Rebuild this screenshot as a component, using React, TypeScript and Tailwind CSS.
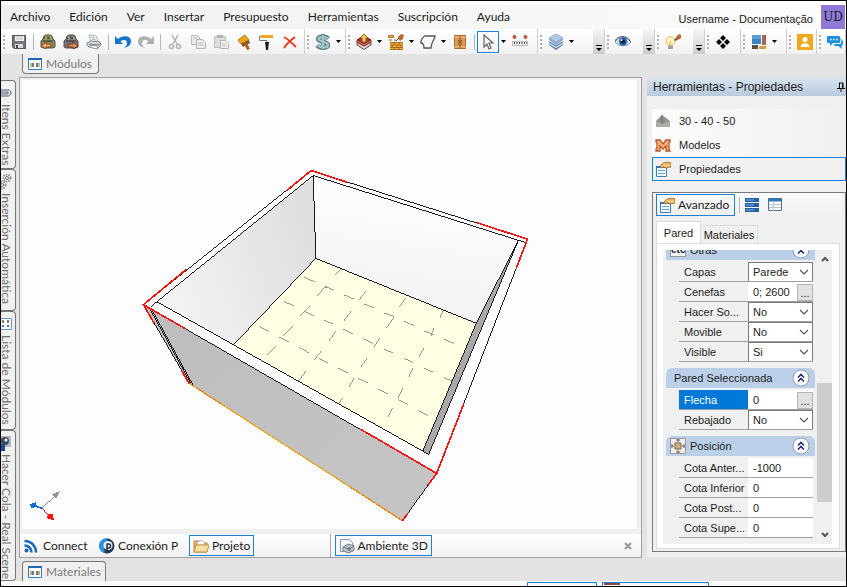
import React from 'react';

type IconProps = { children: React.ReactNode; size?: string };

const Icon = ({ children, size = 'size-4' }: IconProps) => (
  <svg viewBox="0 0 16 16" className={size + ' shrink-0'} fill="none" aria-hidden="true">
    {children}
  </svg>
);

const ToolButton = ({ label, children }: { label: string; children: React.ReactNode }) => (
  <button aria-label={label} className="flex w-[23px] h-[22px] shrink-0 items-center justify-center">
    {children}
  </button>
);

const Grip = () => (
  <svg viewBox="0 0 6 16" className="w-[6px] h-4 shrink-0" aria-hidden="true">
    <path d="M3 1v15" stroke="#b0b0b0" strokeWidth="2" strokeDasharray="2 2" />
  </svg>
);

const Separator = () => <div className="w-px h-[16px] ml-[3px] mr-[2px] bg-[#b5b5b5] shrink-0" />;

const Arrow = ({ label }: { label: string }) => (
  <button aria-label={label} className="flex w-[9px] h-[22px] shrink-0 items-center justify-center">
    <svg viewBox="0 0 5 3" className="w-[5px] h-[3px]" aria-hidden="true">
      <path d="M0 0h5L2.5 3z" fill="#000" />
    </svg>
  </button>
);

const Overflow = () => (
  <button
    aria-label="Más opciones"
    className="ml-auto flex w-[11px] h-full shrink-0 items-end justify-center bg-linear-to-b from-[#f7f7f7] to-[#cccccc] pb-[3px]"
  >
    <svg viewBox="0 0 6 6" className="size-[6px]" aria-hidden="true">
      <path d="M0 0h6v1H0zM0 3h6L3 6z" fill="#000" />
    </svg>
  </button>
);

const group =
  'flex h-full items-center shrink-0 border-r border-[#cfcfcf] bg-linear-to-b from-white to-[#f1f1f1]';

const SaveIcon = () => (
  <Icon>
    <path d="M1 1h14v14H3l-2-2z" fill="#77777b" />
    <path d="M4 1h9v6H4z" fill="#f3f3f3" />
    <path d="M5 3h7M5 5h7" stroke="#bdbdbd" />
    <path d="M4 10h8v5H4z" fill="#d9d9d9" />
    <path d="M5 11h2v3H5z" fill="#444" />
    <path d="M1.500 1.500h13v13h-11l-2-2z" stroke="#55555a" />
  </Icon>
);

const BagIcon = ({ body, flip }: { body: string; flip?: boolean }) => (
  <Icon>
    <path d="M4 2l2-1h4l2 1 1 3 2 2v6l-2 1H3l-2-1V7l2-2z" fill={body} stroke="#555043" />
    <path d="M4 4h8M3 7h10" stroke="#33332e" />
    <path d="M5 3h1v3M10 3h1v3" stroke="#d0c9a0" />
    {flip ? (
      <path d="M5 10h5V8l5 4-5 3v-2H5z" fill="#d98d62" stroke="#79361b" />
    ) : (
      <path d="M11 10H6V8l-5 4 5 3v-2h5z" fill="#eca86b" stroke="#8a4a1f" />
    )}
  </Icon>
);

const PrintIcon = () => (
  <Icon>
    <path d="M3 1l7 1 2 5-7 1z" fill="#fff" stroke="#a6b3ba" />
    <path d="M5 3l4 1M6 5l4 1" stroke="#8fb0c6" />
    <path d="M1 9l4-2 9 1 1 3-3 3-9-1-2-2z" fill="#d8dbdd" stroke="#83898e" />
    <path d="M3 10l9 1 2-1M5 13l6 1" stroke="#6e7478" />
    <path d="M4 11l7 1 1 3-6-1z" fill="#f8f8f8" stroke="#999" />
  </Icon>
);

const UndoIcon = () => (
  <Icon>
    <path d="M0 2v8h8L5.500 7.500C7 5.800 12 5 12 9c0 2-1 3.500-3 5 4-1 7-3 7-7C16 1 7 1 3 5z" fill="#1873cd" />
  </Icon>
);

const RedoIcon = () => (
  <Icon>
    <path d="M16 2v8H8l2.500-2.500C9 5.800 4 5 4 9c0 2 1 3.500 3 5-4-1-7-3-7-7C0 1 9 1 13 5z" fill="#b0b0b0" />
  </Icon>
);

const CutIcon = () => (
  <Icon>
    <path d="M5 1l5 9M11 1L6 10" stroke="#b2b2b2" strokeWidth="1.5" />
    <circle cx="4.500" cy="12.500" r="2" stroke="#b2b2b2" strokeWidth="1.5" />
    <circle cx="11.500" cy="12.500" r="2" stroke="#b2b2b2" strokeWidth="1.5" />
  </Icon>
);

const CopyIcon = () => (
  <Icon>
    <path d="M1.500 1.500h6l2 2v7h-8z" fill="#e9e9e9" stroke="#bcbcbc" />
    <path d="M6.500 5.500h6l3 3v6h-9z" fill="#eee" stroke="#b2b2b2" />
    <path d="M8 9h5M8 11h6M3 4h4" stroke="#bcbcbc" />
  </Icon>
);

const PasteIcon = () => (
  <Icon>
    <path d="M1.500 2.500h11v11h-11z" fill="#dedede" stroke="#bcbcbc" />
    <path d="M4 1h6v3H4z" fill="#b5b5b5" />
    <path d="M7.500 6.500h5l3 3v5h-8z" fill="#f0f0f0" stroke="#b5b5b5" />
    <path d="M9 10h4M9 12h5" stroke="#c4c4c4" />
  </Icon>
);

const BrushIcon = () => (
  <Icon>
    <path d="M2 6l7-5 4 5-8 4z" fill="#eda51e" stroke="#b9770d" />
    <path d="M5 10l8-4 1 3-7 4z" fill="#8d5526" />
    <path d="M8 10l3-1 3 6-3 1z" fill="#a5662e" />
  </Icon>
);

const RollerIcon = () => (
  <Icon>
    <path d="M2 1h12v3H2z" fill="#f3a31c" />
    <path d="M2 2.500H.5v4H8v2" stroke="#777" />
    <path d="M6 8h4l-1 8H7z" fill="#1c1c1c" />
  </Icon>
);

const DeleteIcon = () => (
  <Icon>
    <path d="M2 3c4 2 8 6 12 10M13 3C9 6 5 9 2 14" stroke="#ef3316" strokeWidth="1.800" />
  </Icon>
);

const DollarIcon = () => (
  <Icon>
    <path d="M8 0v16" stroke="#5f8188" strokeWidth="3.500" />
    <path
      d="M13.500 4.500C11 2 3 2 3 5s10 2.500 10 6-8 3.500-11 .500"
      stroke="#5f8188"
      strokeWidth="4.500"
    />
    <path d="M13 4.500C11 2.500 3.500 2.500 3.500 5S13 7.500 13 11s-7.500 3-10.500.500M8 1v14" stroke="#a5c6c8" strokeWidth="2.200" />
  </Icon>
);

const ExportIcon = () => (
  <Icon>
    <path d="M1 6l7-4 7 4v5l-7 4.500L1 11z" fill="#d9d9d9" stroke="#555" />
    <path d="M1 6l7 4 7-4-7-4z" fill="#b8322b" stroke="#7d1915" />
    <path d="M1 8l7 4 7-4" stroke="#b8322b" strokeWidth="1.500" />
    <path d="M8 0l4 4h-2v4H6V4H4z" fill="#f7c66a" stroke="#9a5a10" />
  </Icon>
);

const BricksIcon = () => (
  <Icon>
    <path d="M.5 1.500h5v2h-5z" fill="#f2b233" stroke="#8f5a11" strokeWidth=".8" />
    <path d="M1 6h3M6 6h2" stroke="#8f5a11" />
    <path d="M2 8h13v8H2z" fill="#efb13a" />
    <path d="M2 8.500h13M2 11h13M2 13.500h13M2 15.500h13M6 8v3M11 8v3M4 11v3M9 11v3M13 11v3M6 13v3M11 13v3" stroke="#9a5f15" strokeWidth=".8" />
    <path d="M10 3l3-3 3 1-1 4-3 2z" fill="#b86a31" />
    <path d="M8 7l3-3" stroke="#333" />
  </Icon>
);

const ShapeIcon = () => (
  <Icon>
    <path d="M5 2h10c0 3-4 6-4 12H4c0-3-1-5-3-5 0-3 2-6 4-7z" fill="#fafafa" stroke="#555" strokeWidth="1.300" />
  </Icon>
);

const CabinetIcon = () => (
  <Icon>
    <path d="M2.500 1.500h11v13h-11z" fill="#d99a55" stroke="#a66b2d" />
    <path d="M2 3h12M2 13h12" stroke="#efc088" />
    <path d="M8 2v12" stroke="#8e5824" />
    <path d="M6 6l1 1M10 6L9 7M6 10h1M9 10h1M6.500 8h3" stroke="#6d4015" />
  </Icon>
);

const CursorIcon = () => (
  <Icon>
    <path d="M4 1v12l3-3 2 5 2-1-2-5h4z" fill="#f8f8f8" stroke="#636363" strokeWidth="1.200" />
  </Icon>
);

const RulerIcon = () => (
  <Icon>
    <circle cx="2.500" cy="3" r="2" fill="#cf5b3c" />
    <circle cx="13.500" cy="3" r="2" fill="#cf5b3c" />
    <path d="M1 2h2M12 2h2" stroke="#4d6b64" />
    <path d="M.5 7.500h15v4H.5z" fill="#ededed" stroke="#bbb" />
    <path d="M2 9h13" stroke="#444" strokeWidth="2" strokeDasharray="1 1.500" />
  </Icon>
);

const LayersIcon = () => (
  <Icon>
    <path d="M1 10l7 4 7-4v1l-7 5-7-5z" fill="#5c7eb0" />
    <path d="M1 7l7 4 7-4v2l-7 4-7-4z" fill="#7697c4" />
    <path d="M1 4l7 4 7-4v2l-7 5-7-5z" fill="#8dabd1" />
    <path d="M8 0l7 4-7 4-7-4z" fill="#b4cbe4" stroke="#8fabcb" />
  </Icon>
);

const EyeIcon = () => (
  <Icon>
    <path d="M0 8c3-6 13-6 16 0-4 5-12 5-16 0z" fill="#d5dee8" stroke="#8796a8" />
    <path d="M0 7c3-6 12-6 15 0" stroke="#425872" />
    <circle cx="8" cy="7.500" r="4" fill="#205fa6" />
    <circle cx="8" cy="7.500" r="2" fill="#071c38" />
    <circle cx="6.500" cy="6" r="1" fill="#fff" />
  </Icon>
);

const BulbIcon = () => (
  <Icon>
    <circle cx="5.500" cy="7" r="4.500" fill="#fff3c4" stroke="#e4bd64" />
    <path d="M3 11.500h5V15H3z" fill="#a0a0a0" />
    <path d="M5 11V8l1-1" stroke="#e8a91b" />
    <path d="M9 6l3-3 2 1-3 3z" fill="#555" />
    <path d="M11 3l3-3 2 1v3l-3 2z" fill="#c06424" />
  </Icon>
);

const DiamondsIcon = () => (
  <Icon>
    <path d="M8 1l3 3-3 3-3-3zM8 9l3 3-3 3-3-3zM4 5l3 3-3 3-3-3zM12 5l3 3-3 3-3-3z" fill="#050505" />
  </Icon>
);

const TilesIcon = () => (
  <Icon>
    <path d="M1 1h9v9H1z" fill="#5aa0d5" />
    <path d="M1 5h9v5H1z" fill="#3686c4" />
    <path d="M11 1h4v10h-4z" fill="#ad6257" />
    <path d="M1 11h6v4H1z" fill="#5c4d43" />
    <path d="M8 12h7v3H8z" fill="#d89b4d" />
  </Icon>
);

const UserIcon = () => (
  <Icon>
    <path d="M0 0h16v16H0z" fill="#f3a71c" />
    <circle cx="8" cy="5.500" r="2.500" fill="#fff" />
    <path d="M3.500 13c0-5 9-5 9 0z" fill="#fff" />
  </Icon>
);

const ChatIcon = () => (
  <Icon>
    <path d="M1 2h11c2 0 2 7 0 7H6l-3 3V9H1C-1 9-1 2 1 2z" fill="#1b8fdb" />
    <path d="M14.500 5c2 1 2 6 0 7v3l-3-3H8l-1-2h6c1 0 1.500-2 1.500-5z" fill="#1b8fdb" />
    <path d="M3 5.500h8" stroke="#fff" strokeWidth="1.500" strokeDasharray="1.500 1.500" />
  </Icon>
);

const ModulesIcon = ({ tone }: { tone: string }) => (
  <Icon>
    <path d="M1.500 2.500h13v11h-13z" fill="#fbfdff" stroke="#2c7cc4" />
    <path d="M1 3h14" stroke="#1c67b3" strokeWidth="2" />
    <path d="M3 7h4v4H3zM9 7h4v4H9z" fill={tone} />
    <path d="M5 7h2v4H5zM9 7h2v4H9z" fill="#6d7b83" />
  </Icon>
);

const PropertiesIcon = () => (
  <Icon>
    <path d="M1.500 5.500h10v10h-10z" fill="#f3f9ff" stroke="#3b7fbd" />
    <path d="M1 6h11" stroke="#2d76bb" strokeWidth="2" />
    <path d="M3 9.500h7M3 12.500h7" stroke="#69a1cf" />
    <path d="M5 5l3-3 5-1 3 1v4l-5 1-2-1-3 1z" fill="#f1b45e" stroke="#9b6424" strokeWidth=".8" />
    <path d="M8 3l3 2 4-1" stroke="#fce0ae" />
  </Icon>
);

const menus = ['Archivo', 'Edición', 'Ver', 'Insertar', 'Presupuesto', 'Herramientas', 'Suscripción', 'Ayuda'];

const Header = () => (
  <header className="flex h-7 shrink-0 items-end justify-between bg-linear-to-r from-[#efefef] to-[#fcfcfc] border-t-4 border-white">
    <nav className="flex h-full items-center gap-[19px] pl-[9px]">
      {menus.map((item) => (
        <button key={item}>{item}</button>
      ))}
    </nav>
    <div className="flex items-center gap-2 pr-px font-['Liberation_Sans',sans-serif]">
      <span className="pt-1 text-[11px]">Username - Documentação</span>
      <span className="flex size-6 items-center justify-center bg-[#8f78d6] font-['DejaVu_Serif',serif] text-[12px]">
        UD
      </span>
    </div>
  </header>
);

const Toolbar = () => (
  <div className="flex h-[25px] shrink-0 items-center">
    <div className={group + ' w-[304px]'}>
      <Grip />
      <ToolButton label="Guardar"><SaveIcon /></ToolButton>
      <Separator />
      <ToolButton label="Importar"><BagIcon body="#8b8a57" /></ToolButton>
      <ToolButton label="Exportar"><BagIcon body="#74747b" flip /></ToolButton>
      <ToolButton label="Imprimir"><PrintIcon /></ToolButton>
      <Separator />
      <ToolButton label="Deshacer"><UndoIcon /></ToolButton>
      <ToolButton label="Rehacer"><RedoIcon /></ToolButton>
      <Separator />
      <ToolButton label="Cortar"><CutIcon /></ToolButton>
      <ToolButton label="Copiar"><CopyIcon /></ToolButton>
      <ToolButton label="Pegar"><PasteIcon /></ToolButton>
      <ToolButton label="Pincel"><BrushIcon /></ToolButton>
      <ToolButton label="Rodillo"><RollerIcon /></ToolButton>
      <ToolButton label="Eliminar"><DeleteIcon /></ToolButton>
    </div>
    <div className={group + ' w-[41px]'}>
      <Grip />
      <ToolButton label="Precio"><DollarIcon /></ToolButton>
      <Arrow label="Opciones de precio" />
    </div>
    <div className={group + ' w-[192px]'}>
      <Grip />
      <ToolButton label="Insertar módulo"><ExportIcon /></ToolButton>
      <Arrow label="Opciones de módulo" />
      <ToolButton label="Paredes"><BricksIcon /></ToolButton>
      <Arrow label="Opciones de paredes" />
      <ToolButton label="Forma"><ShapeIcon /></ToolButton>
      <Arrow label="Opciones de forma" />
      <ToolButton label="Puertas"><CabinetIcon /></ToolButton>
      <Separator />
      <button
        aria-label="Seleccionar"
        className="flex size-[22px] shrink-0 items-center justify-center border border-[#1a83d8]"
      >
        <CursorIcon />
      </button>
      <Arrow label="Opciones de selección" />
      <ToolButton label="Medir"><RulerIcon /></ToolButton>
    </div>
    <div className={group + ' grow'}>
      <Grip />
      <ToolButton label="Capas"><LayersIcon /></ToolButton>
      <Arrow label="Opciones de capas" />
      <Overflow />
    </div>
    <div className={group + ' w-[50px]'}>
      <Grip />
      <ToolButton label="Ver"><EyeIcon /></ToolButton>
      <Overflow />
    </div>
    <div className={group + ' w-[50px]'}>
      <Grip />
      <ToolButton label="Iluminación"><BulbIcon /></ToolButton>
      <Overflow />
    </div>
    <div className={group + ' w-[36px]'}>
      <Grip />
      <ToolButton label="Componentes"><DiamondsIcon /></ToolButton>
    </div>
    <div className={group + ' w-[46px]'}>
      <Grip />
      <ToolButton label="Disposición"><TilesIcon /></ToolButton>
      <Arrow label="Opciones de disposición" />
    </div>
    <div className={group + ' w-[30px]'}>
      <Grip />
      <ToolButton label="Usuario"><UserIcon /></ToolButton>
    </div>
    <div className={group + ' w-[29px]'}>
      <Grip />
      <ToolButton label="Chat"><ChatIcon /></ToolButton>
    </div>
  </div>
);

const sideTab =
  'flex flex-col items-end gap-[3px] rounded-r border border-l-0 border-[#767676] bg-[#f0f0f0] pt-1 pr-[3px] text-[#6f6f6f]';
const sideText = 'w-[11px] leading-[11px] whitespace-nowrap [writing-mode:vertical-rl]';

const SideTabs = () => (
  <div className="flex w-[15px] shrink-0 flex-col overflow-hidden pt-[26px]">
    <button className={sideTab + ' h-[89px] shrink-0'}>
      <Icon>
        <path d="M0 5h12c4 0 4 6 0 6H0M0 7h11c2 0 2 2 0 2H0" stroke="#55557c" />
      </Icon>
      <span className={sideText}>Itens Extras</span>
    </button>
    <button className={sideTab + ' h-[142px] shrink-0'}>
      <Icon>
        <circle cx="11" cy="4" r="3.500" stroke="#8e8e8e" strokeWidth="2" strokeDasharray="1.500 1" />
        <circle cx="6" cy="11" r="3.500" stroke="#8e8e8e" strokeWidth="2" strokeDasharray="1.500 1" />
        <circle cx="11" cy="4" r="1.500" stroke="#777" />
        <circle cx="6" cy="11" r="1.500" stroke="#777" />
      </Icon>
      <span className={sideText}>Inserción Automática</span>
    </button>
    <button className={sideTab + ' h-[119px] shrink-0'}>
      <Icon>
        <path d="M2.500 2.500h13v11h-13z" fill="#fff" stroke="#579ad4" />
        <path d="M6 4h2v3H6zM11 4h2v3h-2z" fill="#8c7a69" />
        <path d="M6 9h2v2H6zM11 9h2v2h-2z" fill="#4877bb" />
      </Icon>
      <span className={sideText}>Lista de Módulos</span>
    </button>
    <button className={sideTab + ' grow'}>
      <Icon>
        <path d="M3 1h12v11H3z" fill="#b8b8b8" />
        <circle cx="9" cy="6" r="4" fill="#3a4c63" />
        <circle cx="10" cy="5" r="1.500" fill="#fff" />
        <path d="M3 9h6v7H3z" fill="#174d93" />
      </Icon>
      <span className={sideText}>Hacer Cola - Real Scene</span>
    </button>
  </div>
);

const tileMarks =
  'M631 328l-18 18M521 352l31 13M583 379l29 12M589 379l-9 5-18 23M641 405l31 13M707 393l-22 27M702 432l30 12M825 415l-18 27M762 459l30 11-23 33M939 452l-10 21M459 424l30 13M536 439l-26 28M520 453l29 14M662 454l-21 28M579 481l29 13M821 484l31 13M882 513l29 11M911 505l-9 23M941 538l31 13M384 499l30 15M485 499l-26 28M444 531l30 15M616 514l-20 28M639 508l30 15M699 537l30 15M748 535l-17 25M760 567l29 13M880 565l-14 27M820 595l28 12M880 625l29 12M940 653l26 10M848 625l-13 27M434 559l-25 27M504 562l30 16M572 574l-22 27M564 595l30 15M710 595l-19 27M624 625l29 15M526 634l-21 28M684 656l30 14M671 655l-16 27M744 688l30 15M818 685l-15 28M804 720l29 14M864 752l30 15M785 746l-13 27M636 714l-10 15';

const Scene = () => (
  <svg viewBox="0 0 616 449" className="block w-full h-full" role="img" aria-label="Ambiente 3D" shapeRendering="crispEdges">
    <defs>
      <linearGradient id="leftWall" x1="0" y1="0.700" x2="1" y2="0.300">
        <stop offset="0" stopColor="#f4f4f5" />
        <stop offset="0.500" stopColor="#e9e9ea" />
        <stop offset="1" stopColor="#dedede" />
      </linearGradient>
      <linearGradient id="backWall" x1="0.600" y1="0" x2="0.400" y2="1">
        <stop offset="0" stopColor="#ffffff" />
        <stop offset="1" stopColor="#f1f1f3" />
      </linearGradient>
      <linearGradient id="frontWall" x1="0" y1="0" x2="1" y2="1">
        <stop offset="0" stopColor="#bdbdbd" />
        <stop offset="1" stopColor="#c5c5c5" />
      </linearGradient>
    </defs>
    <g transform="translate(109 80) scale(0.33333)" fill="none" strokeWidth="3" stroke="#1a1a1a">
      <path d="M38 434L919 941L816 1083L188 678L175 670z" fill="url(#frontWall)" stroke="none" />
      <path d="M548 46L556 295L308 555L78 425z" fill="url(#leftWall)" stroke="none" />
      <path d="M548 46L1164 242L1038 490L556 295z" fill="url(#backWall)" stroke="none" />
      <path d="M556 295L1038 490L877 875L308 555z" fill="#ffffe3" stroke="none" />
      <path d={tileMarks} stroke="#96968a" />
      <path d="M1164 242L1038 490L877 875L895 884z" fill="#a9a9a9" stroke="none" />
      <path d="M548 46L556 295L1038 490M556 295L308 555M548 46L60 440M548 46L1188 248M78 425L895 884L1164 242L1038 490L877 875" />
      <path d="M542 31L38 434L919 941L1192 237zM38 434L175 670M58 448L182 674M66 454L188 678M919 941L816 1083" />
      <path d="M175 670L816 1083" stroke="#e9a51c" strokeWidth="4" />
      <path d="M175 670L275 735M660 983L816 1083" stroke="#f4510f" strokeDasharray="5 4" />
      <path
        d="M470 90L542 31L650 66M168 327L38 434L165 507M38 434L70 490M152 632L175 670M1040 188L1192 237L1158 325M1000 733L919 941L690 808M919 941L892 977M832 1062L816 1083"
        stroke="#f5130e"
        strokeWidth="5"
      />
    </g>
    <g transform="translate(-21 400) scale(0.33333)" fill="none" strokeWidth="3">
      <path d="M123 86L158 52" stroke="#8a8a8a" />
      <path d="M178 34L152 44L165 57z" fill="#8f9a8b" />
      <path d="M123 86L104 79" stroke="#0b6bd6" strokeWidth="5" />
      <path d="M86 75L104 67L108 80L92 87z" fill="#0b6bd6" />
      <path d="M123 86L142 106" stroke="#fb1410" />
      <path d="M159 123L137 115L143 103L155 103z" fill="#fb1410" />
    </g>
  </svg>
);

const blueButton = 'flex h-[21px] items-center gap-[3px] border border-[#1a83d8] px-[3px]';

const Workspace = () => (
  <main className="flex min-w-0 grow flex-col pl-[3px]">
    <button className="mb-[3px] ml-[3px] flex h-5 w-[77px] shrink-0 items-center gap-[3px] rounded-b border border-t-0 border-[#777] bg-[#f0f0f0] px-1 text-[#777a7c]">
      <ModulesIcon tone="#c9bd8d" />
      Módulos
    </button>
    <section className="flex min-h-0 grow flex-col border border-[#a0a0a0] bg-[#f0f0f0]">
      <div className="mt-0.5 mr-1 ml-0.5 min-h-0 grow bg-[#fdfdfd]">
        <Scene />
      </div>
      <div className="mt-[5px] flex h-[23px] shrink-0">
        <div className="flex w-1/2 items-center border-r border-[#a8a8a8] bg-linear-to-b from-white to-[#f1f1f1] pl-[3px]">
          <button className="flex w-[76px] items-center gap-1">
            <Icon>
              <circle cx="3.500" cy="12.500" r="2" fill="#1b5fae" />
              <path d="M1.500 7.500c4 0 7 3 7 7M1.500 3c7 0 11.500 5 11.500 11.500" stroke="#1b69bd" strokeWidth="2.500" />
            </Icon>
            Connect
          </button>
          <button className="flex w-[90px] items-center gap-[3px]">
            <Icon>
              <circle cx="8" cy="8" r="7.500" fill="#263a50" />
              <path d="M9 0.500A7.500 7.500 0 0 0 6 15.300L5 11 6 6z" fill="#2b91dc" />
              <circle cx="9" cy="7.500" r="4.500" fill="#f5f8fb" />
              <path d="M8 13V6h2c2 0 2 4 0 4H8" stroke="#1e2f42" strokeWidth="1.500" />
            </Icon>
            Conexión P
          </button>
          <button className={blueButton}>
            <Icon>
              <path d="M1 3h5l1 2h7v9H1z" fill="#e6bd6c" stroke="#b38233" />
              <path d="M4 4l5-2 4 5H5z" fill="#fff" stroke="#a2a2a2" strokeWidth=".8" />
              <path d="M3 7h13l-2 7H1z" fill="#f8dea0" stroke="#bf933f" />
            </Icon>
            Projeto
          </button>
        </div>
        <div className="flex grow items-center justify-between bg-linear-to-b from-white to-[#f1f1f1] pr-[7px] pl-1">
          <button className={blueButton}>
            <Icon>
              <path d="M1.500 1.500h9l3 3v9h-12z" fill="#f7fbff" stroke="#7b9fc7" />
              <path d="M4 9l5-3 6 2v4l-5 3-6-2z" fill="#c3c6c9" stroke="#777d83" />
              <path d="M4 9l6 2 5-3" stroke="#73797e" />
              <circle cx="10" cy="11" r="2" fill="#77838d" />
            </Icon>
            Ambiente 3D
          </button>
          <button aria-label="Cerrar" className="flex size-3 items-center justify-center">
            <svg viewBox="0 0 8 8" className="size-2" aria-hidden="true">
              <path d="M1 1l6 6M7 1L1 7" stroke="#999" strokeWidth="2" />
            </svg>
          </button>
        </div>
      </div>
    </section>
    <button className="mt-[3px] ml-[3px] flex h-5 w-[84px] shrink-0 items-center gap-[3px] rounded-t border border-b-0 border-[#777] bg-[#f0f0f0] px-1 text-[#777a7c]">
      <ModulesIcon tone="#d4a56a" />
      Materiales
    </button>
  </main>
);

type Row = { label: string; value: string; kind: 'select' | 'dots' | 'text'; active?: boolean };

const sections: { title: string; icon?: React.ReactNode; rows: Row[] }[] = [
  {
    title: 'Otras',
    icon: <span className="w-4 border border-[#999] bg-[#f4f4f4] text-center text-[10px] leading-3 font-bold">etc</span>,
    rows: [
      { label: 'Capas', value: 'Parede', kind: 'select' },
      { label: 'Cenefas', value: '0; 2600', kind: 'dots' },
      { label: 'Hacer So...', value: 'No', kind: 'select' },
      { label: 'Movible', value: 'No', kind: 'select' },
      { label: 'Visible', value: 'Si', kind: 'select' },
    ],
  },
  {
    title: 'Pared Seleccionada',
    rows: [
      { label: 'Flecha', value: '0', kind: 'dots', active: true },
      { label: 'Rebajado', value: 'No', kind: 'select' },
    ],
  },
  {
    title: 'Posición',
    icon: (
      <Icon>
        <path d="M.5.5h15v15H.5z" fill="#f0eee9" stroke="#999" />
        <path d="M5 5h6v6H5z" fill="#cfae85" stroke="#77664f" />
        <path d="M8 1v3M8 12v3M1 8h3M12 8h3M6 2h4M6 14h4M2 6v4M14 6v4" stroke="#666" />
      </Icon>
    ),
    rows: [
      { label: 'Cota Anter...', value: '-1000', kind: 'text' },
      { label: 'Cota Inferior', value: '0', kind: 'text' },
      { label: 'Cota Post...', value: '0', kind: 'text' },
      { label: 'Cota Supe...', value: '0', kind: 'text' },
    ],
  },
  { title: '', rows: [] },
];

const PropertyRow = ({ row }: { row: Row }) => {
  const id = 'prop-' + row.label.replace(/\W/g, '');
  return (
    <div className="mr-0.5 ml-[13px] flex h-5 border-b border-[#a0a0a0]">
      <label
        htmlFor={id}
        className={
          'w-[69px] shrink-0 pl-[5px] leading-5 whitespace-nowrap ' +
          (row.active ? 'bg-[#0078d7] text-white' : 'bg-[#f0f0f0]')
        }
      >
        {row.label}
      </label>
      {row.kind === 'select' ? (
        <div className="grid min-w-0 grow">
          <select
            id={id}
            className="col-start-1 row-start-1 w-full appearance-none border border-b-0 border-[#7a7a7a] bg-white pl-1 leading-4"
          >
            <option>{row.value}</option>
          </select>
          <svg
            viewBox="0 0 10 6"
            className="pointer-events-none col-start-1 row-start-1 mr-1 h-[6px] w-[10px] self-center justify-self-end"
            aria-hidden="true"
          >
            <path d="M1 1l4 4 4-4" fill="none" stroke="#555" strokeWidth="1.200" />
          </svg>
        </div>
      ) : (
        <div className="flex min-w-0 grow bg-white">
          <input id={id} defaultValue={row.value} className="w-0 min-w-0 grow bg-white pl-[5px] leading-4" />
          {row.kind === 'dots' && (
            <button aria-label={'Editar ' + row.label} className="mt-0.5 w-4 border border-[#b5b5b5] bg-[#e1e1e1] leading-3">
              ...
            </button>
          )}
        </div>
      )}
    </div>
  );
};

const PropertyGrid = () => (
  <div className="flex h-full min-h-0 bg-[#f0f0f0]">
    <div className="min-w-0 grow overflow-hidden pr-0.5 pl-[3px]">
      <div className="-mt-[10px] flex flex-col gap-[6px]">
        {sections.map((section) => (
          <section key={section.title}>
            <div className="mb-0.5 flex h-5 items-center gap-1 rounded-t-md bg-[#bbd0e8] pr-[5px] pl-1">
              {section.icon}
              <h3 className={'grow ' + (section.icon ? '' : 'pl-1')}>{section.title}</h3>
              <button aria-label={'Contraer ' + section.title}>
                <svg viewBox="0 0 18 18" className="size-[18px]" fill="none" aria-hidden="true">
                  <circle cx="9" cy="9" r="8" fill="#fff" stroke="#8f9ab0" />
                  <path d="M6 8.500l3-3 3 3M6 12.500l3-3 3 3" stroke="#1f2f74" strokeWidth="1.600" />
                </svg>
              </button>
            </div>
            {section.rows.map((row) => (
              <PropertyRow key={row.label} row={row} />
            ))}
          </section>
        ))}
      </div>
    </div>
    <div className="flex w-[15px] shrink-0 flex-col items-center bg-[#f0f0f0] py-[6px]">
      <svg viewBox="0 0 8 6" className="h-[6px] w-2 shrink-0" aria-hidden="true">
        <path d="M1 5l3-3 3 3" fill="none" stroke="#555" strokeWidth="2" />
      </svg>
      <div className="grow-4 basis-0" />
      <div className="h-[119px] w-full shrink-0 bg-[#cdcdcd]" />
      <div className="grow basis-0" />
      <svg viewBox="0 0 8 6" className="h-[6px] w-2 shrink-0" aria-hidden="true">
        <path d="M1 1l3 3 3-3" fill="none" stroke="#555" strokeWidth="2" />
      </svg>
    </div>
  </div>
);

const toolRow = 'flex h-6 shrink-0 items-center gap-2 bg-linear-to-r from-[#fcfcfc] to-[#f0f0f0] pl-[3px]';

const PropertiesPanel = () => (
  <aside className="mt-[23px] mb-6 ml-[5px] flex w-[199px] shrink-0 flex-col bg-[#f0f0f0] pb-[5px] font-['Liberation_Sans',sans-serif] text-[11px]">
    <div className="flex h-[19px] shrink-0 items-center justify-between bg-linear-to-b from-[#d9e4f0] to-[#b9cadd] pr-px pl-[6px]">
      <h2 className="text-[12px]">Herramientas - Propiedades</h2>
      <button aria-label="Fijar panel">
        <svg viewBox="0 0 8 10" className="h-[10px] w-2" fill="none" aria-hidden="true">
          <path d="M2 1h4v5M2.500 1v5M5.500 1v5M0 6.500h8M4 7v3" stroke="#111" />
        </svg>
      </button>
    </div>
    <div className="mt-[13px] ml-[5px] flex flex-col">
      <button className={toolRow}>
        <Icon>
          <path d="M1 8l6-6 8 6v5H1z" fill="#8e948d" />
          <path d="M1 8l6 3 8-3v6H1z" fill="#a9aea7" />
          <path d="M7 2v9" stroke="#666c66" />
        </Icon>
        30 - 40 - 50
      </button>
      <button className={toolRow}>
        <Icon>
          <path d="M1 3h4l3 4 3-4h4v2l-1 1v6l1 2h-4V9l-3 3-3-3v5H1v-2l1-1V6L1 5z" fill="#f2b07b" stroke="#ba5626" strokeWidth="1.300" />
        </Icon>
        Modelos
      </button>
      <button className="flex h-6 shrink-0 items-center gap-2 border border-[#1a83d8] pl-0.5">
        <PropertiesIcon />
        Propiedades
      </button>
    </div>
    <div className="mt-[11px] ml-[5px] flex min-h-0 grow flex-col border border-[#7a7a7a] px-[3px] pb-0.5">
      <div className="flex h-[24px] shrink-0 items-center bg-linear-to-b from-[#fafafa] to-[#f0f0f0]">
        <button className="flex h-[22px] w-[79px] items-center gap-[3px] border border-[#1a83d8] pl-0.5 font-['Lato',sans-serif] text-[12px]">
          <PropertiesIcon />
          Avanzado
        </button>
        <div className="ml-1 h-4 w-px bg-[#b5b5b5]" />
        <ToolButton label="Ver como lista">
          <Icon>
            <path d="M1 1h14v4H1zM1 6h14v4H1zM1 11h14v4H1z" fill="#245f9e" />
            <path d="M2 3h8M2 8h8M2 13h8" stroke="#7ab6e8" />
          </Icon>
        </ToolButton>
        <ToolButton label="Ver como tabla">
          <Icon>
            <path d="M1.500 1.500h13v12h-13z" fill="#fff" stroke="#56708e" />
            <path d="M1 3h14" stroke="#2f75bb" strokeWidth="3" />
            <path d="M2 7.500h12M2 10.500h12M6.500 5v9" stroke="#b5c3d0" />
          </Icon>
        </ToolButton>
      </div>
      <div role="tablist" className="mt-1 flex h-[22px] shrink-0 items-end">
        <button role="tab" aria-selected="true" className="h-[22px] w-[45px] border border-b-0 border-[#dcdcdc] bg-white">
          Pared
        </button>
        <button role="tab" aria-selected="false" className="h-[18px] w-[57px] border border-b-0 border-l-0 border-[#dcdcdc]">
          Materiales
        </button>
      </div>
      <div className="mr-[2px] min-h-0 grow border border-[#dcdcdc] bg-white pt-[6px] pr-[7px] pb-1 pl-[6px]">
        <PropertyGrid />
      </div>
    </div>
  </aside>
);

export default function App() {
  return (
    <div className="flex h-screen flex-col overflow-hidden border border-black bg-[#e3e3e3] font-['Lato',sans-serif] text-[12px] leading-4 text-[#1b1b1b]">
      <Header />
      <Toolbar />
      <div className="flex min-h-0 grow">
        <SideTabs />
        <Workspace />
        <PropertiesPanel />
      </div>
      <footer className="flex h-[5px] shrink-0 items-end justify-end gap-[5px] bg-[#fafafa] pr-[137px]">
        <div className="h-1 w-[70px] border border-b-0 border-[#1a83d8]" />
        <div className="h-1 w-[107px] border border-b-0 border-[#1a83d8] pl-px">
          <div className="h-0.5 w-4 bg-[#8c4a44]" />
        </div>
      </footer>
    </div>
  );
}
